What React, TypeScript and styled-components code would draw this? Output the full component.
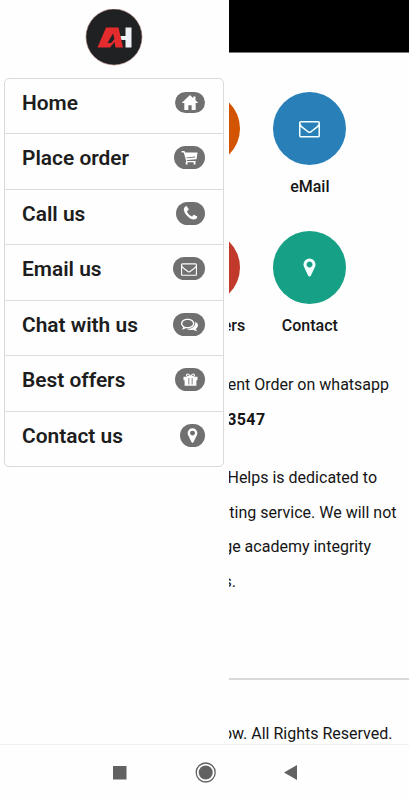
import React from "react";
import styled, { createGlobalStyle } from "styled-components";

const GlobalStyle = createGlobalStyle`
  * { box-sizing: border-box; }
  body { margin: 0; background: #fefefe; font-family: Roboto, sans-serif; color: #151515; overflow: hidden; }
`;

const Screen = styled.div`
  width: 409px;
  height: 800px;
  display: flex;
  flex-direction: column;
  overflow: hidden;
`;

const Body = styled.div`
  height: 744px;
  display: flex;
`;

const Drawer = styled.aside`
  width: 229px;
  flex: none;
  padding: 9px 5px 0 4px;
  background: #fefefe;
`;

const Logo = styled.svg`
  display: block;
  width: 58px;
  height: 58px;
  margin: 0 0 11px 81px;
`;

const Menu = styled.nav`
  width: 220px;
  height: 389px;
  display: grid;
  grid-template-rows: 54.4px repeat(6, 1fr);
  border: 1px solid #dadada;
  border-radius: 5px;
`;

const MenuItem = styled.div`
  display: flex;
  justify-content: space-between;
  align-items: flex-start;
  padding: 13px 18px 0 17px;
  & + & { border-top: 1px solid #dcdcdc; padding-top: 12px; }
`;

const Label = styled.span`
  font-size: 20.9px;
  line-height: 23px;
  font-weight: 600;
  white-space: nowrap;
  color: #1d1d1d;
  ${MenuItem} + ${MenuItem} & { line-height: 25px; }
`;

const Badge = styled.span<{ $w: number; $h?: number }>`
  width: ${(p) => p.$w}px;
  height: ${(p) => p.$h ?? 23}px;
  display: flex;
  align-items: center;
  justify-content: center;
  border-radius: 12px;
  background: #707070;
  color: #fff;
`;

const Glyph = styled.svg<{ $s: number }>`
  display: block;
  width: ${(p) => p.$s}px;
  height: ${(p) => p.$s}px;
  fill: currentColor;
`;

const Page = styled.main`
  flex: 1;
  min-width: 0;
  overflow: hidden;
`;

const TopBar = styled.header`
  height: 53px;
  background: #000;
  border-bottom: 1px solid #777;
`;

const Tiles = styled.section`
  display: grid;
  grid-template-columns: 73px 73px;
  column-gap: 33px;
  grid-auto-rows: 139px;
  margin: 39px 0 0 -61.7px;
`;

const Tile = styled.div`
  display: flex;
  flex-direction: column;
  align-items: center;
`;

const Disc = styled.div<{ $c: string }>`
  width: 73px;
  height: 73px;
  flex: none;
  display: flex;
  align-items: center;
  justify-content: center;
  border-radius: 50%;
  background: ${(p) => p.$c};
  color: #f4ffff;
`;

const Caption = styled.div<{ $shift?: number }>`
  margin-top: 11px;
  font-size: 16px;
  line-height: 22px;
  font-weight: 500;
  white-space: nowrap;
  transform: translateX(${(p) => p.$shift ?? 0}px);
`;

const Paragraph = styled.div<{ $top: number }>`
  margin-top: ${(p) => p.$top}px;
  display: flex;
  flex-direction: column;
`;

const Line = styled.div<{ $end: number; $bold?: boolean }>`
  display: flex;
  justify-content: flex-end;
  padding-right: ${(p) => 409 - p.$end}px;
  font-size: 16px;
  line-height: 34.6px;
  font-weight: ${(p) => (p.$bold ? 700 : 400)};
  letter-spacing: ${(p) => (p.$bold ? 0.4 : 0)}px;
  white-space: nowrap;
`;

const Rule = styled.div`
  margin-top: 78px;
  height: 2px;
  background: #d9d9d9;
`;

const SystemBar = styled.footer`
  height: 56px;
  display: flex;
  align-items: center;
  justify-content: center;
  border-top: 1px solid #f0f0f0;
  background: #fefefe;
`;

const SystemIcons = styled.svg`
  display: block;
  width: 409px;
  height: 54px;
`;

const paths = {
  home: "M896 110L60 900H330V1600H730V1120H1060V1600H1460V900H1732L1440 624V240H1220V416Z",
  cart: "M60 200H370L440 380H1740L1640 1080L620 1160L650 1260H1540V1400H1520V1640H1330V1400H690V1640H500V1400L560 1330L290 360H60ZM600 980L1480 890L1500 800L560 900Z",
  phone: "M1600 1240q0 27-10 70.5t-21 68.5q-21 50-122 106-94 51-186 51-27 0-53-3.5t-57.5-12.5-47-14.5-55.5-20.5-49-18q-98-35-175-83-127-79-264-216t-216-264q-48-77-83-175-3-9-18-49t-20.5-55.5-14.5-47-12.5-57.5-3.5-53q0-92 51-186 56-101 106-122 25-11 68.5-21t70.5-10q14 0 21 3 18 6 53 76 11 19 30 54t35 63.5 31 53.5q3 4 17.5 25t21.5 35.5 7 28.5q0 20-28.5 50t-62 55-62 53-28.5 46q0 9 5 22.5t8.5 20.5 14 24 11.5 19q76 137 174 235t235 174q2 1 19 11.5t24 14 20.5 8.5 22.5 5q18 0 46-28.5t53-62 55-62 50-28.5q14 0 28.5 7t35.5 21.5 25 17.5q25 15 53.5 31t63.5 35 54 30q70 35 76 53 3 7 3 21z",
  mail: "M1664 1504v-768q-32 36-69 66-268 206-426 338-51 43-83 67t-86.5 48.5-102.5 24.5h-2q-48 0-102.5-24.5t-86.5-48.5-83-67q-158-132-426-338-37-30-69-66v768q0 13 9.5 22.5t22.5 9.5h1472q13 0 22.5-9.5t9.5-22.5zm0-1051v-24.5l-.5-13-3-12.5-5.5-9-9-7.5-14-2.5h-1472q-13 0-22.5 9.5t-9.5 22.5q0 168 147 284 193 152 401 317 6 5 35 29.5t46 37.5 44.5 31.5 50.5 27.5 43 9h2q20 0 43-9t50.5-27.5 44.5-31.5 46-37.5 35-29.5q208-165 401-317 54-43 100.5-115.5t46.5-131.5zm128-37v1088q0 66-47 113t-113 47h-1472q-66 0-113-47t-47-113v-1088q0-66 47-113t113-47h1472q66 0 113 47t47 113z",
  chat: "M704 300C325 300 0 510 0 800C0 960 95 1090 240 1180C210 1260 160 1310 110 1360C95 1390 115 1415 145 1410C300 1390 430 1330 510 1280C570 1292 640 1300 704 1300C1083 1300 1408 1090 1408 800C1408 510 1083 300 704 300ZM704 430C1010 430 1260 600 1260 800C1260 1000 1010 1170 704 1170C625 1170 555 1160 490 1145L400 1205L420 1140L320 1080C200 1010 145 900 145 800C145 600 398 430 704 430ZM1500 600C1680 690 1792 830 1792 980C1792 1140 1700 1270 1552 1360C1580 1440 1630 1490 1682 1540C1700 1570 1675 1600 1645 1590C1490 1570 1360 1510 1280 1460C1050 1510 760 1465 600 1350C1120 1390 1570 1080 1500 600Z",
  gift: "M60 580H560Q330 570 350 370Q370 170 560 170Q740 170 896 430Q1052 170 1232 170Q1422 170 1442 370Q1462 570 1232 580H1732V1000H1600V1630H192V1000H60ZM560 300Q480 300 475 380Q475 460 580 460H780Q650 300 560 300ZM1232 300Q1142 300 1012 460H1212Q1317 460 1317 380Q1312 300 1232 300ZM650 720V1480H750V720ZM1040 720V1480H1140V720Z",
  pin: "M1152 640q0-106-75-181t-181-75-181 75-75 181 75 181 181 75 181-75 75-181zm256 0q0 109-33 179l-364 774q-16 33-47.5 52t-67.5 19-67.5-19-46.5-52l-365-774q-33-70-33-179 0-212 150-362t362-150 362 150 150 362z",
};

type IconName = keyof typeof paths;

const Icon = ({ name, size }: { name: IconName; size: number }) => (
  <Glyph viewBox="0 0 1792 1792" $s={size} aria-hidden>
    <path fillRule="evenodd" d={paths[name]} />
  </Glyph>
);

const items: { label: string; icon: IconName; w: number; h?: number; size: number }[] = [
  { label: "Home", icon: "home", w: 30, h: 21, size: 18 },
  { label: "Place order", icon: "cart", w: 31, size: 17 },
  { label: "Call us", icon: "phone", w: 29, size: 17 },
  { label: "Email us", icon: "mail", w: 32, size: 16 },
  { label: "Chat with us", icon: "chat", w: 32, size: 17 },
  { label: "Best offers", icon: "gift", w: 30, size: 15 },
  { label: "Contact us", icon: "pin", w: 25, size: 17 },
];

export default function App() {
  return (
    <Screen>
      <GlobalStyle />
      <Body>
        <Drawer>
          <Logo viewBox="0 0 58 58">
            <circle cx="29" cy="28" r="28" fill="#202122" stroke="#a77d76" strokeWidth=".6" />
            <path fill="#e42b2e" fillRule="evenodd" d="M12.500 38.500L21 18.500H33.500L38 38.500H30.500L29.500 33L25 38.500ZM28 24.500L22.500 34H26L29.500 30Z" />
            <path fill="#eef0f5" d="M40.500 18.500H46.500V38.500H40.500V31H36.500L35.500 27H40.500Z" />
          </Logo>
          <Menu>
            {items.map((it) => (
              <MenuItem key={it.label}>
                <Label>{it.label}</Label>
                <Badge $w={it.w} $h={it.h}>
                  <Icon name={it.icon} size={it.size} />
                </Badge>
              </MenuItem>
            ))}
          </Menu>
        </Drawer>
        <Page>
          <TopBar />
          <Tiles>
            <Tile>
              <Disc $c="#d35400" />
            </Tile>
            <Tile>
              <Disc $c="#2980b9"><Icon name="mail" size={21} /></Disc>
              <Caption>eMail</Caption>
            </Tile>
            <Tile>
              <Disc $c="#c0392b" />
              <Caption $shift={19}>Offers</Caption>
            </Tile>
            <Tile>
              <Disc $c="#16a085"><Icon name="pin" size={21} /></Disc>
              <Caption>Contact</Caption>
            </Tile>
          </Tiles>
          <Paragraph $top={-2}>
            <Line $end={389}>ent Order on whatsapp</Line>
            <Line $end={265.5} $bold>3547</Line>
          </Paragraph>
          <Paragraph $top={24}>
            <Line $end={377}>Helps is dedicated to</Line>
            <Line $end={396.5}>ting service. We will not</Line>
            <Line $end={371}>ge academy integrity</Line>
            <Line $end={236}>s.</Line>
          </Paragraph>
          <Rule />
          <Paragraph $top={37}>
            <Line $end={392.5}>ow. All Rights Reserved.</Line>
          </Paragraph>
        </Page>
      </Body>
      <SystemBar>
        <SystemIcons viewBox="0 0 409 54" fill="#626262">
          <rect x="113" y="20" width="13.5" height="13.5" />
          <circle cx="205.700" cy="26.500" r="9.500" fill="none" stroke="#626262" strokeWidth="1.300" />
          <circle cx="205.700" cy="26.500" r="7" />
          <path d="M284 26.500L297 19V34Z" />
        </SystemIcons>
      </SystemBar>
    </Screen>
  );
}
